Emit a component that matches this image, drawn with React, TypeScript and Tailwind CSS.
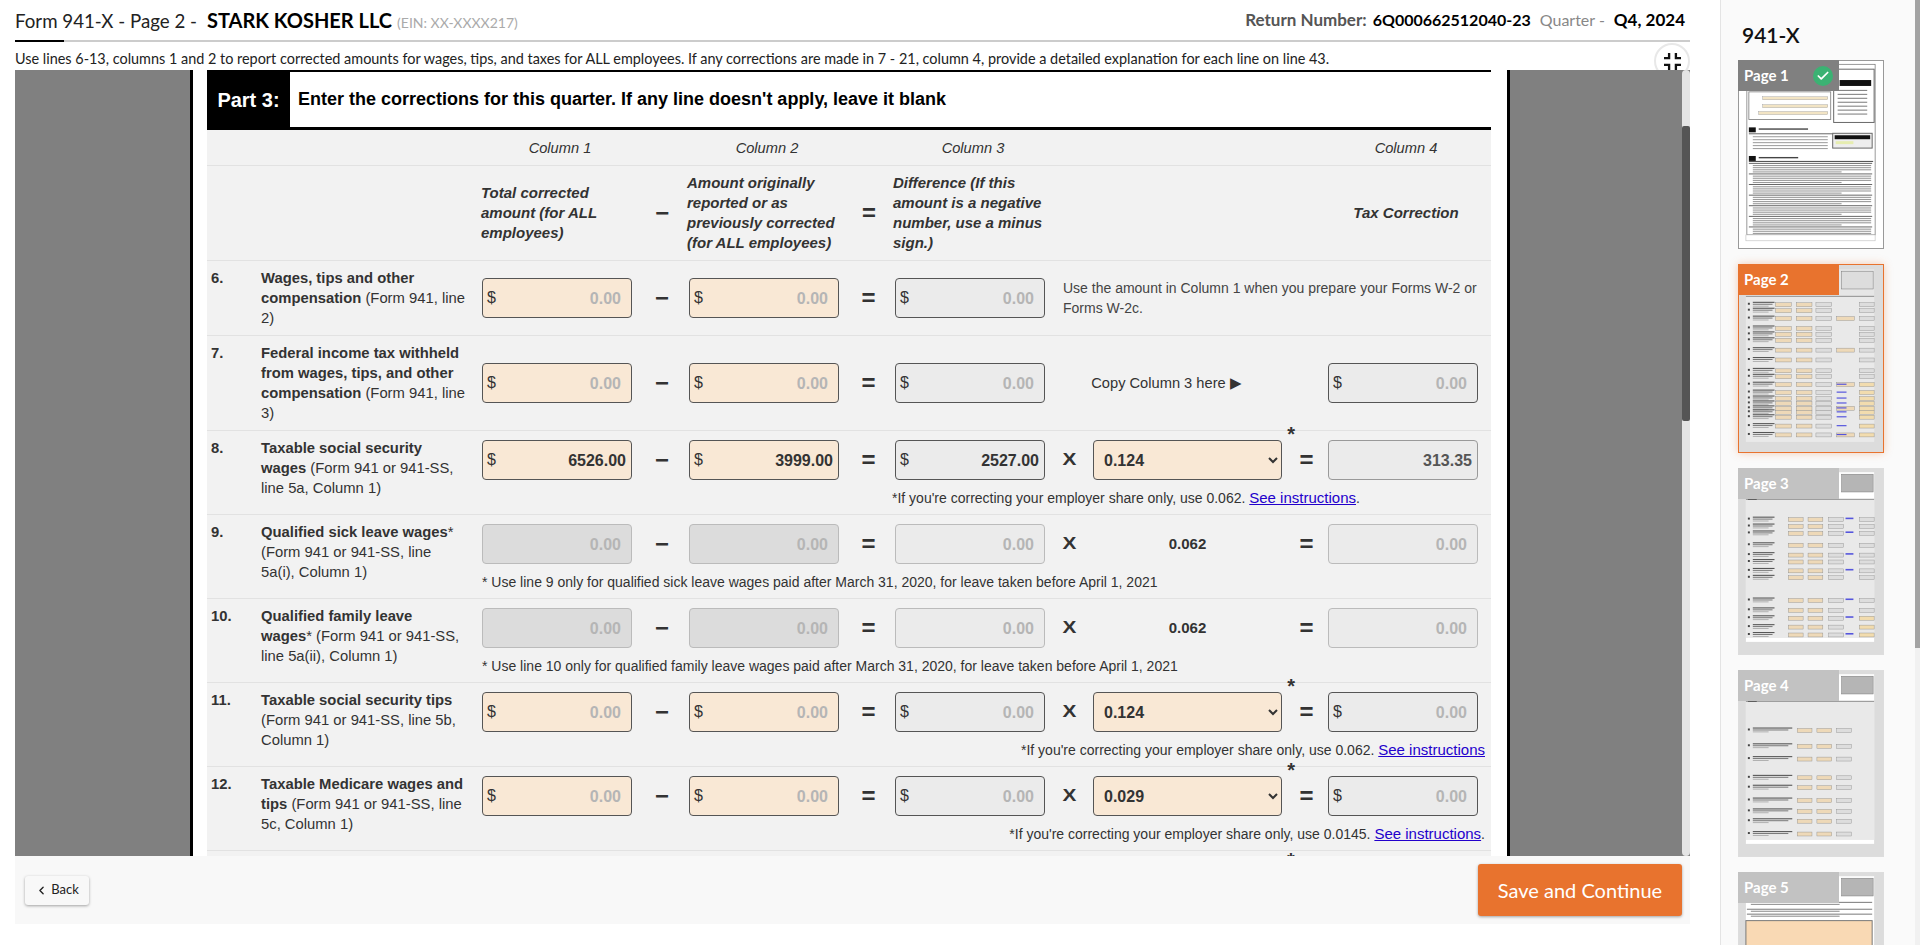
import { ChevronLeft, Check } from "lucide-react";

type Tone = "edit" | "calc" | "off" | "offCalc" | "plain";

const tones: Record<Tone, string> = {
  edit: "bg-[#f9e8d5] border-[#555]",
  calc: "bg-[#ebebeb] border-[#555]",
  plain: "bg-[#ebebeb] border-[#999]",
  off: "bg-[#dcdcdc] border-[#bbb]",
  offCalc: "bg-[#ebebeb] border-[#bbb]",
};

function Amount({ tone, value = "0.00", dollar = true }: { tone: Tone; value?: string; dollar?: boolean }) {
  const empty = value === "0.00";
  return (
    <div className={`flex h-10 items-center justify-between rounded-[4px] border pl-[4px] ${empty ? "pr-[10px]" : "pr-[5px]"} ${tones[tone]}`}>
      <span className="text-[16px] text-[#333]">{dollar ? "$" : ""}</span>
      <span className={`pt-px text-[16px] font-bold ${empty ? "text-[#b5b5b5]" : tone === "plain" ? "text-[#555]" : "text-[#333]"}`}>{value}</span>
    </div>
  );
}

function Op({ children }: { children: string }) {
  return <div className="flex h-10 items-center justify-center pl-[3px] text-[24px] font-bold text-[#333]">{children}</div>;
}

function Times() {
  return (
    <div className="flex h-10 items-center justify-center">
      <span className="scale-x-[1.3] text-[16px] font-bold text-[#333]">X</span>
    </div>
  );
}

function Rate({ value }: { value: string }) {
  return (
    <div className="relative">
      <select
        defaultValue={value}
        className="h-10 w-full rounded-[4px] border border-[#555] bg-[#f9e8d5] pl-[6px] text-[16px] font-bold text-[#333]"
      >
        <option value={value}>{value}</option>
      </select>
      <span className="absolute -top-[16px] right-[-13px] text-[20px] font-bold leading-5 text-[#333]">*</span>
    </div>
  );
}

const link = "text-[15px] text-[#2200cc] underline";
const grid = "grid grid-cols-[54px_221px_150px_57px_150px_56px_150px_48px_189px_46px_150px_13px]";

function Label({ num, children }: { num: string; children: React.ReactNode }) {
  return (
    <>
      <div className="pl-1 text-[14.8px] font-bold text-[#333]">{num}</div>
      <div className="pr-[16px] text-[14.8px] text-[#333]">{children}</div>
    </>
  );
}

// rows with a note underneath share the same shape
function NoteRow({
  num, label, c1, c2, c3, rate, result, note,
}: {
  num: string;
  label: React.ReactNode;
  c1: React.ReactNode;
  c2: React.ReactNode;
  c3: React.ReactNode;
  rate: React.ReactNode;
  result: React.ReactNode;
  note: React.ReactNode;
}) {
  return (
    <div className={`${grid} h-[84px] border-b border-[#e2e2e2] pt-[7px] leading-5`}>
      <Label num={num}>{label}</Label>
      <div className="col-span-10 flex flex-col pt-[2px]">
        <div className="grid grid-cols-[150px_57px_150px_56px_150px_48px_189px_46px_150px]">
          {c1}
          <Op>−</Op>
          {c2}
          <Op>=</Op>
          {c3}
          <Times />
          {rate}
          <Op>=</Op>
          {result}
        </div>
        <div className="mt-[8px] pr-[6px] text-[14px] text-[#333]">{note}</div>
      </div>
    </div>
  );
}

const thumbRows: Record<number, { y: number[]; x: number[]; label: number; w: number }> = {
  2: { y: [37, 43, 51, 61, 67, 73, 83, 93, 104, 110, 118, 126, 132, 137, 142, 146, 151, 160, 169], x: [37, 58, 78], label: 14, w: 16 },
  3: { y: [49, 56, 63, 75, 85, 92, 101, 108, 131, 141, 149, 158, 166], x: [50, 70, 91], label: 14, w: 15 },
  4: { y: [58, 74, 87, 106, 116, 129, 140, 150, 163], x: [59, 79, 99], label: 14, w: 15 },
};

function PageOne() {
  const lines = Array.from({ length: 34 }, (_, i) => i);
  return (
    <g>
      <rect x="8" y="2" width="130" height="173" fill="#fff" stroke="#555" strokeWidth="0.6" />
      <rect x="7" y="175" width="131" height="6" fill="#fff" stroke="#bbb" strokeWidth="0.6" />
      <rect x="10" y="30" width="83" height="28" fill="none" stroke="#777" strokeWidth="0.8" />
      <rect x="96" y="7" width="41" height="54" fill="none" stroke="#666" strokeWidth="1" />
      <rect x="102" y="18" width="32" height="6" fill="#111" />
      {[28, 32, 36, 40, 44, 48, 52].map((y) => (
        <rect key={y} x="100" y={y} width="30" height="1" fill="#777" />
      ))}
      <rect x="24" y="35" width="66" height="3" fill="#f2e4c4" stroke="#999" strokeWidth="0.4" />
      <rect x="24" y="43" width="66" height="3" fill="#f2e4c4" stroke="#999" strokeWidth="0.4" />
      <rect x="20" y="50" width="70" height="3" fill="#f2e4c4" stroke="#999" strokeWidth="0.4" />
      <rect x="10" y="66" width="7" height="5" fill="#111" />
      <rect x="20" y="67" width="50" height="1.4" fill="#444" />
      <rect x="10" y="72" width="85" height="1" fill="#666" />
      {[75, 78, 81, 84, 87].map((y) => (
        <rect key={y} x="14" y={y} width="76" height="1" fill="#999" />
      ))}
      <rect x="95" y="72" width="40" height="15" fill="#eee" stroke="#666" />
      <rect x="97" y="74" width="36" height="4" fill="#111" />
      <rect x="98" y="80" width="18" height="3" fill="#e6edb0" />
      <rect x="10" y="95" width="7" height="5" fill="#111" />
      <rect x="20" y="96" width="40" height="1.4" fill="#444" />
      <rect x="10" y="100" width="126" height="1" fill="#444" />
      {lines.map((i) => (
        <rect
          key={i}
          x={i % 5 === 0 ? 10 : 14}
          y={102 + i * 2.15}
          width={i % 5 === 4 ? 90 : i % 5 === 0 ? 125 : 120}
          height={i % 5 === 0 ? 0.9 : 1.1}
          fill={i % 5 === 0 ? "#555" : "#9a9a9a"}
        />
      ))}
    </g>
  );
}

function PageRows({ kind }: { kind: number }) {
  const r = thumbRows[kind];
  return (
    <g>
      <rect x="7" y="3" width="130" height={kind === 2 ? 175 : 172} fill={kind === 2 ? "#e6e6e6" : "#fff"} />
      <rect x="7" y="30" width="130" height={kind === 2 ? 148 : 141} fill="#e9e9e9" />
      <rect x="104" y="5" width="32" height="18" fill={kind === 2 ? "#ddd" : "#b5b5b5"} stroke="#777" strokeWidth="0.5" />
      {kind !== 2 ? <rect x="9" y="28" width="9" height="3" fill="#111" /> : null}
      <rect x="7" y="30" width="130" height="0.8" fill="#777" />
      {r.y.map((y, i) => (
        <g key={y}>
          <rect x="9" y={y} width="2" height="2" fill="#444" />
          <rect x={r.label} y={y - 1} width={kind === 4 ? 40 : 22} height="1.1" fill="#555" />
          <rect x={r.label} y={y + 1} width={kind === 4 ? 36 : 20} height="1" fill="#777" />
          <rect x={r.label} y={y + 3} width="16" height="0.9" fill="#aaa" />
          <rect x={r.x[0]} y={y} width={r.w} height="4" fill="#eed9b8" stroke="#888" strokeWidth="0.4" />
          <rect x={r.x[1]} y={y} width={r.w} height="4" fill="#eed9b8" stroke="#888" strokeWidth="0.4" />
          <rect x={r.x[2]} y={y} width={r.w} height="4" fill="#ddd" stroke="#888" strokeWidth="0.4" />
          {kind === 2 && i % 4 === 2 ? <rect x="99" y={y} width="18" height="4" fill="#eed9b8" stroke="#888" strokeWidth="0.4" /> : null}
          {kind !== 2 && kind !== 4 && i % 2 === 0 ? <rect x="108" y={y} width="8" height="1.6" fill="#5555dd" /> : null}
          {kind === 2 && i > 9 ? <rect x="99" y={y + 1} width="10" height="1.2" fill="#5555dd" /> : null}
          {kind !== 4 ? <rect x="122" y={y} width="15" height="4" fill={i > 9 ? "#f2dcae" : "#ddd"} stroke="#888" strokeWidth="0.4" /> : null}
        </g>
      ))}
    </g>
  );
}

function PageFive() {
  return (
    <g>
      <rect x="7" y="3" width="130" height="190" fill="#fff" />
      <rect x="104" y="5" width="32" height="18" fill="#b5b5b5" stroke="#777" strokeWidth="0.5" />
      {[29, 36, 41].map((y) => (
        <g key={y}>
          <rect x="8" y={y} width="127" height="0.8" fill="#555" />
          <rect x="12" y={y + 2} width="90" height="1" fill="#888" />
        </g>
      ))}
      <rect x="7" y="48" width="128" height="140" fill="#f9d9b4" stroke="#777" />
    </g>
  );
}

function Thumb({ kind, label, active, done, tall }: { kind: number; label: string; active?: boolean; done?: boolean; tall?: boolean }) {
  const tag = active ? "bg-[#e8732e]" : done ? "bg-[#808080]" : "bg-[#c2c2c2]";
  const frame = active
    ? "border border-[#e8732e] bg-[#dcdcdc] shadow-[0_0_8px_rgba(232,115,46,0.35)]"
    : done
    ? "border border-[#999] bg-white"
    : "border border-[#ddd] bg-[#dcdcdc]";
  return (
    <div className={`relative w-[146px] shrink-0 ${tall ? "h-[189px]" : "h-[187px]"} ${frame}`}>
      <svg viewBox="0 0 146 187" className="absolute inset-0 h-full w-full" aria-hidden="true">
        {kind === 1 ? <PageOne /> : kind === 5 ? <PageFive /> : <PageRows kind={kind} />}
      </svg>
      <div className={`absolute -left-px -top-px flex h-[31px] w-[101px] items-center justify-between pl-[6px] pr-[6px] font-['Lato',sans-serif] text-[15px] font-bold text-white ${tag}`}>
        <span>{label}</span>
        {done ? (
          <span className="flex h-5 w-5 items-center justify-center rounded-full bg-[#3bb273]">
            <Check size={14} strokeWidth={3} />
          </span>
        ) : null}
      </div>
    </div>
  );
}

export default function App() {
  const dis = <Amount tone="off" dollar={false} />;
  const disCalc = <Amount tone="offCalc" dollar={false} />;
  const edit = <Amount tone="edit" />;
  const calc = <Amount tone="calc" />;
  const share = (v: string, dot: boolean) => (
    <div className="text-right">
      *If you're correcting your employer share only, use {v}. <span className={link}>See instructions</span>
      {dot ? "." : ""}
    </div>
  );
  const fixed = <div className="flex h-10 items-center justify-center text-[15px] font-bold">0.062</div>;

  return (
    <div className="flex h-[945px] w-[1920px] overflow-hidden bg-white font-['Liberation_Sans',Arial,sans-serif]">
      <main className="flex h-[924px] w-[1690px] shrink-0 flex-col pl-[15px]">
        <header className="relative flex h-[42px] shrink-0 items-center justify-between border-b-2 border-[#ccc] pr-[5px] font-['Lato',sans-serif] text-[#222]">
          <div className="flex items-baseline">
            <span className="text-[18.7px]">Form 941-X - Page 2 -</span>
            <span className="ml-[10px] text-[20px] font-bold text-black">STARK KOSHER LLC</span>
            <span className="ml-[5px] text-[14px] text-[#aaa]">(EIN: XX-XXXX217)</span>
          </div>
          <div className="flex items-baseline">
            <span className="text-[17px] font-bold text-[#555]">Return Number:</span>
            <span className="ml-[6px] text-[16px] font-bold text-black">6Q000662512040-23</span>
            <span className="ml-[9px] text-[16px] text-[#888]">Quarter -</span>
            <span className="ml-[9px] text-[17px] font-bold text-black">Q4, 2024</span>
          </div>
          <div className="absolute bottom-[-2px] left-0 h-[2px] w-[49px] bg-black" />
        </header>

        <div className="relative flex h-[28px] shrink-0 items-center pt-[6px] font-['Lato',sans-serif] text-[14.43px] text-[#222]">
          Use lines 6-13, columns 1 and 2 to report corrected amounts for wages, tips, and taxes for ALL employees. If any corrections are made in 7 - 21, column 4, provide a detailed explanation for each line on line 43.
          <div className="absolute right-0 top-[1px] flex h-9 w-9 items-center justify-center rounded-full border-2 border-[#e8e8e8] bg-white">
            <svg viewBox="0 0 16 16" className="h-[17px] w-[17px]" fill="none" stroke="#111" strokeWidth="2.2" aria-hidden="true">
              <path d="M4.800 0v4.800H0M11.200 0v4.800H16M4.800 16v-4.800H0M11.200 16v-4.800H16" />
            </svg>
          </div>
        </div>

        <div className="relative z-10 flex h-[786px] shrink-0 overflow-hidden bg-[#808080]">
          <div className="w-[175px] shrink-0" />
          <div className="h-[1200px] w-[1320px] shrink-0 border-x-[3px] border-black bg-white pl-[14px] pr-[16px]">
            <section className="flex h-[60px] items-stretch border-t-[2px] border-b-[3px] border-black bg-white">
              <div className="flex w-[83px] items-center justify-center bg-black text-[20px] font-bold text-white">Part 3:</div>
              <div className="flex items-center pl-[8px] text-[18px] font-bold text-black">Enter the corrections for this quarter. If any line doesn't apply, leave it blank</div>
            </section>

            <div className="bg-[#f2f2f2] text-[14px] leading-5 text-[#333]">
              <div className={`${grid} h-[36px] items-center border-b border-[#e2e2e2] text-[14.67px] italic`}>
                <div className="col-start-3 pl-[6px] text-center">Column 1</div>
                <div className="col-start-5 pl-[6px] text-center">Column 2</div>
                <div className="col-start-7 pl-[6px] text-center">Column 3</div>
                <div className="col-start-11 pl-[6px] text-center">Column 4</div>
              </div>
              <div className={`${grid} h-[95px] items-center border-b border-[#e2e2e2] text-[15px] font-bold italic`}>
                <div className="col-start-3 -ml-px pr-[12px]">Total corrected amount (for ALL employees)</div>
                <Op>−</Op>
                <div className="-ml-[2px] -mr-[2px]">Amount originally reported or as previously corrected (for ALL employees)</div>
                <Op>=</Op>
                <div className="-ml-[2px]">Difference (If this amount is a negative number, use a minus sign.)</div>
                <div className="col-start-11 pl-[6px] text-center">Tax Correction</div>
              </div>

              <div className={`${grid} h-[75px] items-center border-b border-[#e2e2e2]`}>
                <div className="col-span-2 flex self-start pt-[7px] text-[14.8px]">
                  <div className="w-[54px] shrink-0 pl-1 font-bold">6.</div>
                  <div className="pr-[16px]"><b>Wages, tips and other compensation</b> (Form 941, line 2)</div>
                </div>
                {edit}
                <Op>−</Op>
                {edit}
                <Op>=</Op>
                {calc}
                <div className="col-span-5 pl-[18px] text-[#444]">Use the amount in Column 1 when you prepare your Forms W-2 or Forms W-2c.</div>
              </div>

              <div className={`${grid} h-[95px] items-center border-b border-[#e2e2e2]`}>
                <div className="col-span-2 flex self-start pt-[7px] text-[14.8px]">
                  <div className="w-[54px] shrink-0 pl-1 font-bold">7.</div>
                  <div className="pr-[16px]"><b>Federal income tax withheld from wages, tips, and other compensation</b> (Form 941, line 3)</div>
                </div>
                {edit}
                <Op>−</Op>
                {edit}
                <Op>=</Op>
                {calc}
                <div className="col-span-3 pr-[40px] text-center text-[14.67px]">Copy Column 3 here ▶</div>
                {calc}
              </div>

              <NoteRow
                num="8."
                label={<><b>Taxable social security wages</b> (Form 941 or 941-SS, line 5a, Column 1)</>}
                c1={<Amount tone="edit" value="6526.00" />}
                c2={<Amount tone="edit" value="3999.00" />}
                c3={<Amount tone="calc" value="2527.00" />}
                rate={<Rate value="0.124" />}
                result={<Amount tone="plain" value="313.35" dollar={false} />}
                note={<div className="pl-[410px]">*If you're correcting your employer share only, use 0.062. <span className={link}>See instructions</span>.</div>}
              />
              <NoteRow
                num="9."
                label={<><b>Qualified sick leave wages</b>* (Form 941 or 941-SS, line 5a(i), Column 1)</>}
                c1={dis}
                c2={dis}
                c3={disCalc}
                rate={fixed}
                result={disCalc}
                note="* Use line 9 only for qualified sick leave wages paid after March 31, 2020, for leave taken before April 1, 2021"
              />
              <NoteRow
                num="10."
                label={<><b>Qualified family leave wages</b>* (Form 941 or 941-SS, line 5a(ii), Column 1)</>}
                c1={dis}
                c2={dis}
                c3={disCalc}
                rate={fixed}
                result={disCalc}
                note="* Use line 10 only for qualified family leave wages paid after March 31, 2020, for leave taken before April 1, 2021"
              />
              <NoteRow
                num="11."
                label={<><b>Taxable social security tips</b> (Form 941 or 941-SS, line 5b, Column 1)</>}
                c1={edit}
                c2={edit}
                c3={calc}
                rate={<Rate value="0.124" />}
                result={calc}
                note={share("0.062", false)}
              />
              <NoteRow
                num="12."
                label={<><b>Taxable Medicare wages and tips</b> (Form 941 or 941-SS, line 5c, Column 1)</>}
                c1={edit}
                c2={edit}
                c3={calc}
                rate={<Rate value="0.029" />}
                result={calc}
                note={share("0.0145", true)}
              />
              <div className="relative h-[300px]">
                <span className="absolute left-[1080px] top-[-1px] text-[20px] font-bold leading-5">*</span>
              </div>
            </div>
          </div>
          <div className="absolute right-0 top-0 h-full w-[8px] rounded-[4px] bg-[#e4e4e4]">
            <div className="mt-[56px] h-[295px] w-full rounded-[2px] bg-[#555]" />
          </div>
        </div>

        <footer className="flex h-[68px] shrink-0 items-center justify-between bg-[#f8f8f8] pl-[10px] pr-[8px]">
          <button className="flex h-[29px] w-[64px] items-center justify-center gap-[3px] rounded-[3px] bg-[#f8f8f8] font-['Lato',sans-serif] text-[13px] text-[#222] shadow-[0_1px_3px_rgba(0,0,0,0.35)]">
            <ChevronLeft size={13} strokeWidth={2.5} />
            Back
          </button>
          <button className="h-[52px] w-[204px] rounded-[3px] bg-[#e8732e] font-['Lato',sans-serif] text-[20px] text-white shadow-[0_1px_3px_rgba(0,0,0,0.35)]">
            Save and Continue
          </button>
        </footer>
      </main>

      <div className="w-[30px] shrink-0" />

      <aside className="flex h-[945px] w-[200px] shrink-0 overflow-hidden border-l border-[#e4e4e4] bg-[#fafafa]">
        <div className="flex w-[194px] shrink-0 flex-col pl-[17px]">
          <div className="flex h-[60px] shrink-0 items-center pt-[10px] pl-[4px] font-['Lato',sans-serif] text-[21px] font-semibold text-[#111]">941-X</div>
          <div className="flex shrink-0 flex-col gap-[15px]">
            <Thumb kind={1} label="Page 1" done tall />
            <Thumb kind={2} label="Page 2" active tall />
            <Thumb kind={3} label="Page 3" />
            <Thumb kind={4} label="Page 4" />
            <Thumb kind={5} label="Page 5" />
          </div>
        </div>
        <div className="h-[945px] w-[5px] shrink-0 bg-[#f1f1f1]">
          <div className="h-[648px] bg-[#a3a3a3]" />
        </div>
      </aside>
    </div>
  );
}
